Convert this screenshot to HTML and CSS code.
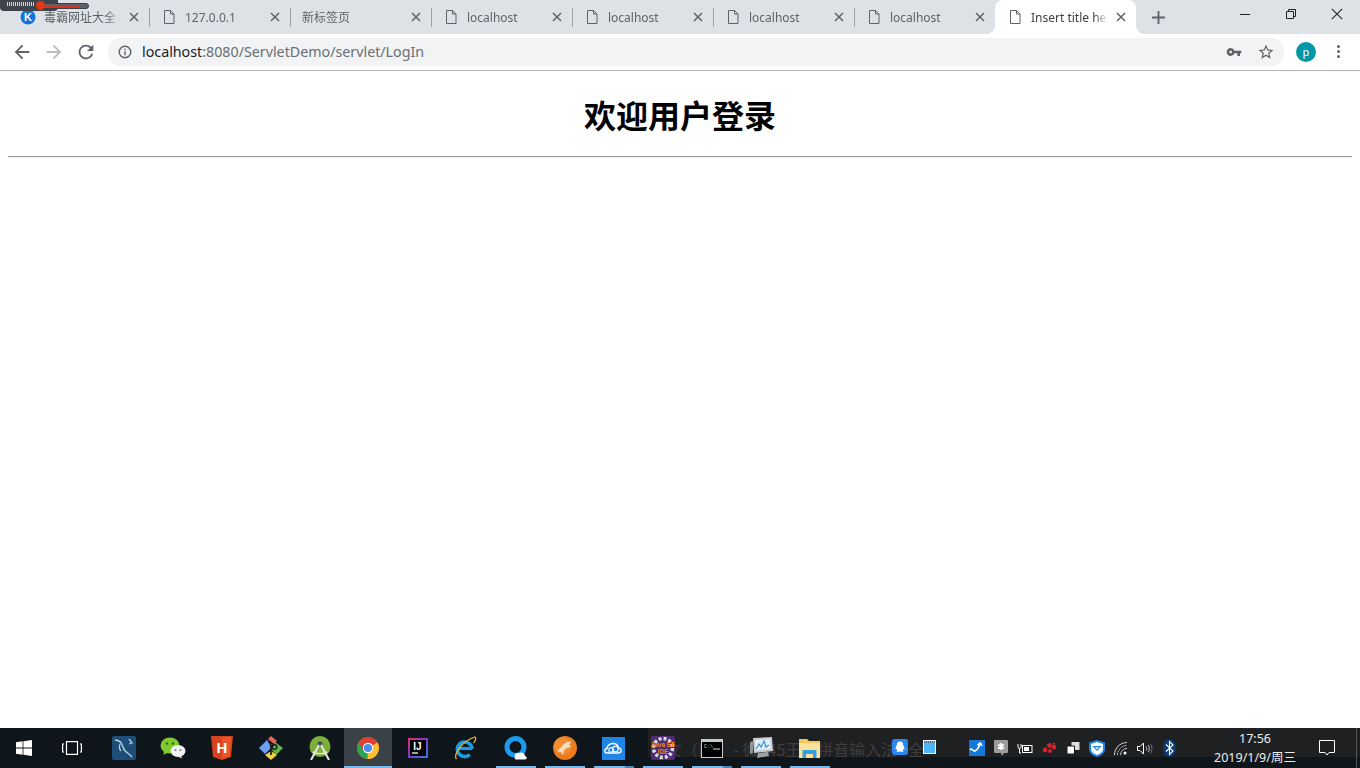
FILE: index.html
```html
<!DOCTYPE html>
<html lang="zh-CN">
<head>
<meta charset="utf-8">
<title>Insert title here</title>
<link rel="stylesheet" href="styles.css">
</head>
<body>
<svg class="defs" width="0" height="0" aria-hidden="true">
  <symbol id="doc" viewBox="0 0 16 16"><path d="M3.5 1.5h6l3.5 3.5v9.500h-9.500z M9.500 1.500v3.500h3.500" fill="none" stroke="#5f6368" stroke-width="1"/></symbol>
  <symbol id="x" viewBox="0 0 10 10"><path d="M1 1l8 8M9 1l-8 8" stroke="#5f6368" stroke-width="1.500" fill="none"/></symbol>
</svg>

<div class="volume"><div class="meter"></div><div class="track"><span class="fill"></span><span class="knob"></span></div></div>

<header class="tabstrip">
  <div class="tab">
    <svg class="fav" viewBox="0 0 16 16"><circle cx="8" cy="8" r="7.500" fill="#1273dc"/><text x="8" y="12" text-anchor="middle" class="fav-k">K</text></svg>
    <span class="tab-title">毒霸网址大全</span>
    <svg class="close" viewBox="0 0 10 10"><use href="#x"/></svg><i class="sep"></i>
  </div>
  <div class="tab">
    <svg class="fav"><use href="#doc"/></svg>
    <span class="tab-title">127.0.0.1</span>
    <svg class="close" viewBox="0 0 10 10"><use href="#x"/></svg><i class="sep"></i>
  </div>
  <div class="tab">
    <span class="tab-title">新标签页</span>
    <svg class="close" viewBox="0 0 10 10"><use href="#x"/></svg><i class="sep"></i>
  </div>
  <div class="tab">
    <svg class="fav"><use href="#doc"/></svg>
    <span class="tab-title">localhost</span>
    <svg class="close" viewBox="0 0 10 10"><use href="#x"/></svg><i class="sep"></i>
  </div>
  <div class="tab">
    <svg class="fav"><use href="#doc"/></svg>
    <span class="tab-title">localhost</span>
    <svg class="close" viewBox="0 0 10 10"><use href="#x"/></svg><i class="sep"></i>
  </div>
  <div class="tab">
    <svg class="fav"><use href="#doc"/></svg>
    <span class="tab-title">localhost</span>
    <svg class="close" viewBox="0 0 10 10"><use href="#x"/></svg><i class="sep"></i>
  </div>
  <div class="tab">
    <svg class="fav"><use href="#doc"/></svg>
    <span class="tab-title">localhost</span>
    <svg class="close" viewBox="0 0 10 10"><use href="#x"/></svg>
  </div>
  <div class="tab tab-active">
    <svg class="fav"><use href="#doc"/></svg>
    <span class="tab-title">Insert title here</span>
    <svg class="close" viewBox="0 0 10 10"><use href="#x"/></svg>
  </div>
  <svg class="newtab" viewBox="0 0 14 14"><path d="M7 0v14M0 7h14" stroke="#5f6368" stroke-width="2"/></svg>
  <div class="spacer"></div>
  <div class="winbtn"><svg width="12" height="12" viewBox="0 0 12 12"><path d="M1 6.500h10" stroke="#222" stroke-width="1"/></svg></div>
  <div class="winbtn"><svg width="12" height="12" viewBox="0 0 12 12"><path d="M1.500 3.500h7v7h-7zM3.500 3.500v-2h7v7h-2" fill="none" stroke="#222" stroke-width="1"/></svg></div>
  <div class="winbtn"><svg width="12" height="12" viewBox="0 0 12 12"><path d="M.8.800l10.400 10.400M11.200.800L.8 11.200" stroke="#222" stroke-width="1.100"/></svg></div>
</header>

<nav class="toolbar">
  <div class="navbtn"><svg viewBox="0 0 24 24"><path fill="#5f6368" d="M20 11H7.830l5.590-5.590L12 4l-8 8 8 8 1.410-1.410L7.830 13H20v-2z"/></svg></div>
  <div class="navbtn"><svg viewBox="0 0 24 24"><path fill="#b9bbbe" d="M12 4l-1.410 1.410L16.170 11H4v2h12.170l-5.580 5.590L12 20l8-8z"/></svg></div>
  <div class="navbtn"><svg viewBox="0 0 24 24"><path fill="#5f6368" d="M17.650 6.350A7.958 7.958 0 0 0 12 4c-4.420 0-7.990 3.580-7.990 8s3.570 8 7.990 8c3.730 0 6.840-2.550 7.730-6h-2.080A5.990 5.990 0 0 1 12 18c-3.310 0-6-2.690-6-6s2.690-6 6-6c1.660 0 3.140.690 4.220 1.780L13 11h7V4l-2.350 2.350z"/></svg></div>
  <div class="omnibox">
    <svg class="info" viewBox="0 0 14 14"><circle cx="7" cy="7" r="5.800" fill="none" stroke="#5f6368" stroke-width="1.400"/><path d="M7 6.200v4M7 3.800v1.400" stroke="#5f6368" stroke-width="1.400"/></svg>
    <span class="url"><span class="host">localhost</span>:8080/ServletDemo/servlet/LogIn</span>
    <svg class="omni-key" viewBox="0 0 24 24"><path fill="#5f6368" d="M12.650 10A5.990 5.990 0 0 0 7 6c-3.310 0-6 2.690-6 6s2.690 6 6 6a5.990 5.990 0 0 0 5.650-4H17v4h4v-4h2v-4H12.650zM7 14c-1.100 0-2-.9-2-2s.9-2 2-2 2 .9 2 2-.9 2-2 2z"/></svg>
    <svg class="omni-star" viewBox="0 0 24 24"><path fill="#5f6368" d="M22 9.240l-7.190-.62L12 2 9.190 8.630 2 9.240l5.460 4.730L5.820 21 12 17.270 18.180 21l-1.630-7.030L22 9.240zM12 15.400l-3.760 2.270 1-4.280-3.320-2.880 4.380-.38L12 6.100l1.710 4.040 4.380.38-3.320 2.880 1 4.280L12 15.400z"/></svg>
  </div>
  <div class="avatar">p</div>
  <div class="menu"><i></i><i></i><i></i></div>
</nav>

<main class="page">
  <h1 class="title">欢迎用户登录</h1>
  <hr class="rule">
</main>

<footer class="taskbar">
  <div class="ime">中文（简） - 微345王码拼音输入法&nbsp;&nbsp;&nbsp;全</div>
  <div class="sys"><svg width="18" height="18" viewBox="0 0 18 18"><path fill="#fff" d="M1 3.200l6.600-.9v6.200H1zM8.400 2.200L17 1v7.500H8.400zM1 9.400h6.600v6.300L1 14.800zM8.400 9.400H17V17l-8.600-1.200z"/></svg></div>
  <div class="sys"><svg width="20" height="14" viewBox="0 0 20 14"><path d="M4.500.6h11v12.800h-11zM2 3H.6v8H2M18 3h1.400v8H18" fill="none" stroke="#fff" stroke-width="1.200"/></svg></div>
  <div class="apps">
    <div class="app"><svg width="24" height="24" viewBox="0 0 24 24"><rect width="24" height="24" rx="2" fill="#1d4e78"/><path d="M3 4c4 0 7 3 8 7s3 5 6 7l3 3M8 8c-1 3 0 6 1 7M17 3l3 4-3 1" fill="none" stroke="#b9cfdf" stroke-width="1.300"/></svg></div>
    <div class="app"><svg width="26" height="22" viewBox="0 0 26 22"><ellipse cx="10" cy="8.500" rx="9.500" ry="8" fill="#7fcb2c"/><path d="M4 14l-.5 4 4.500-2.500z" fill="#7fcb2c"/><circle cx="7" cy="6.500" r="1.200" fill="#33691e"/><circle cx="13" cy="6.500" r="1.200" fill="#33691e"/><ellipse cx="18" cy="14" rx="7.500" ry="6" fill="#f2f2f2"/><path d="M21 18.500l1 3-4-2z" fill="#f2f2f2"/><circle cx="15.500" cy="13" r="1" fill="#777"/><circle cx="20.500" cy="13" r="1" fill="#777"/></svg></div>
    <div class="app"><svg width="22" height="24" viewBox="0 0 22 24"><path d="M0 0h22l-2 21-9 3-9-3z" fill="#d8431f"/><path d="M11 1v21.500l7.500-2.500L20.300 1z" fill="#e8562a"/><text x="11" y="17" text-anchor="middle" class="ic-h">H</text></svg></div>
    <div class="app"><svg width="24" height="24" viewBox="0 0 24 24"><path d="M0 12l8-8 6 6-8 8z" fill="#6d9ef6"/><path d="M9 3l3-3 6 5-3 3z" fill="#e8655a"/><path d="M16 6l8 6-7 7-4-5z" fill="#62b84a"/><path d="M12 15l6 4-6 5-6-5z" fill="#f4cf4a"/><path d="M9 5c3 2 3 5 3 10v4M15 8c-2 1-3 4-3 7" fill="none" stroke="#1d1d1d" stroke-width="1.700"/><circle cx="15.500" cy="11" r="2.300" fill="none" stroke="#1d1d1d" stroke-width="1.500"/></svg></div>
    <div class="app"><svg width="24" height="24" viewBox="0 0 24 24"><circle cx="12" cy="10.500" r="10.500" fill="#7caf38"/><circle cx="12" cy="8" r="2.500" fill="#445"/><path d="M11 9L3 24M13 9l8 15" stroke="#e8e8e8" stroke-width="2"/><path d="M5 16c4 2 10 2 14 0" stroke="#e8e8e8" stroke-width="1.400" fill="none"/></svg></div>
    <div class="app app-active"><svg width="24" height="24" viewBox="0 0 24 24"><circle cx="12" cy="12" r="11" fill="#dc4335"/><path d="M12 12L2.500 6.500A11 11 0 0 0 12 23z" fill="#2fa44f" /><path d="M12 12l-.5 11A11 11 0 0 0 21.500 6.500z" fill="#fbc02d"/><path d="M12 6.500h9.500A11 11 0 0 0 2.500 6.500L7 14z" fill="#dc4335"/><circle cx="12" cy="12" r="5.200" fill="#fff"/><circle cx="12" cy="12" r="4.100" fill="#4a8df0"/></svg></div>
    <div class="app"><svg width="20" height="20" viewBox="0 0 20 20"><defs><linearGradient id="ij" x1="0" y1="0" x2="1" y2="1"><stop offset="0" stop-color="#e62e6f"/><stop offset=".5" stop-color="#7a3bd0"/><stop offset="1" stop-color="#2b7de9"/></linearGradient></defs><rect width="20" height="20" fill="url(#ij)"/><rect x="2" y="2" width="16" height="16" fill="#000"/><text x="9.500" y="12" text-anchor="middle" class="ic-ij">IJ</text><path d="M4 15h6" stroke="#fff" stroke-width="1.300"/></svg></div>
    <div class="app"><svg class="ie" width="24" height="24" viewBox="0 0 24 24"><path d="M5 12.500h14" stroke="#1b9be4" stroke-width="3.200"/><path d="M19 13a7.300 7.300 0 1 0-2.300 5.600" fill="none" stroke="#1b9be4" stroke-width="3.600"/><path d="M3.500 23C0 19 9 5 22 1c1.500 2 .5 4-1.500 6" fill="none" stroke="#e3b23c" stroke-width="1.300"/></svg></div>
    <div class="app"><svg width="24" height="24" viewBox="0 0 24 24"><circle cx="11.500" cy="11" r="8.500" fill="none" stroke="#1c9cf0" stroke-width="5"/><path d="M11 21c-1.500-3 2-5 4-3.500 2-2 6-.5 6 2.500 2 0 2.500 3.500 0 3.500H12c-1.500 0-1.500-2-1-2.500z" fill="#fff"/></svg></div>
    <div class="app"><svg width="24" height="24" viewBox="0 0 24 24"><circle cx="12" cy="12" r="12" fill="#ea7a1c"/><circle cx="10" cy="10" r="9" fill="#f19a3e" opacity=".6"/><path d="M4 15c2-1 3-3 5-5 2-3 6-5 10-4-2 1-3 2-3 3l2 2-4 1-3 2-1 5-2-3z" fill="#f6ddc2"/></svg></div>
    <div class="app"><svg width="23" height="23" viewBox="0 0 23 23"><rect width="23" height="23" fill="#1e86e8"/><path d="M5 16c-3 0-3-4 0-4.500 0-3 3-5 6-5 3 0 5 2 5.500 4.500 3-.5 4 4.500 0 5z" fill="none" stroke="#fff" stroke-width="1.300"/><circle cx="9" cy="13" r="2.200" fill="none" stroke="#fff" stroke-width="1.100"/><circle cx="13.500" cy="12" r="2.800" fill="none" stroke="#fff" stroke-width="1.100"/></svg></div>
    <div class="app"><svg width="24" height="24" viewBox="0 0 24 24"><rect width="24" height="24" rx="2" fill="#4d2c73"/><circle cx="12" cy="12" r="9.500" fill="none" stroke="#dcdcdc" stroke-width="3.500" stroke-dasharray="3 2"/><text x="12" y="11" text-anchor="middle" class="ic-je">Java EE</text><text x="12" y="18" text-anchor="middle" class="ic-je">IDE</text></svg></div>
    <div class="app"><svg width="22" height="19" viewBox="0 0 22 19"><rect width="22" height="19" fill="#c9c9c9"/><rect x="1" y="3" width="20" height="15" fill="#000"/><text x="3" y="9" class="ic-cmd">C:\</text><path d="M12 10h7" stroke="#ddd" stroke-width="1"/></svg></div>
    <div class="app"><svg width="24" height="22" viewBox="0 0 24 22"><path d="M4 1l19-1 1 14-19 2z" fill="#c8ccd0"/><path d="M6 3l15-1 1 10-16 1.500z" fill="#dff0fa"/><path d="M7 12l3-5 2 3 3-6 2 6 3-2" fill="none" stroke="#3a8fd8" stroke-width="1.200"/><path d="M9 16l10-1 1 4-12 2z" fill="#9aa0a4"/><path d="M1 5l3-1v12l-3 1z" fill="#8e9498"/></svg></div>
    <div class="app"><svg width="21" height="19" viewBox="0 0 21 19"><path d="M0 0h8l2 2h11v17H0z" fill="#f2c75c"/><path d="M0 4h21v15H0z" fill="#fbe29a"/><path d="M3.500 19v-8h14v8h-3.500v-4H7v4z" fill="#2f9fe8"/></svg></div>
  </div>
  <div class="quick">
    <svg width="16" height="16" viewBox="0 0 20 20"><rect width="20" height="20" rx="3" fill="#2c86ec"/><path d="M10 3c-3 0-4 2-4 4.500 0 1-2 3-1.500 5.500 1 .5 1.500-.5 1.500-.5l.5 1.500-1 1.500c2 1 3.500 0 4.500 0s2.500 1 4.500 0l-1-1.500.5-1.500s.5 1 1.500.5c.5-2.500-1.500-4.500-1.500-5.500C14 5 13 3 10 3z" fill="#fff"/></svg>
    <svg width="13" height="14" viewBox="0 0 13 14"><rect x=".5" y=".5" width="12" height="13" fill="#4db5fa" stroke="#fff"/><path d="M1 2h11" stroke="#333" stroke-width="1" stroke-dasharray="1 1"/></svg>
  </div>
  <div class="tray">
    <span class="tray-first"><svg width="16" height="16" viewBox="0 0 16 16"><rect width="16" height="16" fill="#1677d8"/><path d="M1 10c2-3 3 2 5 1s4-4 5-7M8.500 5L11.500 3l1.500 3" fill="none" stroke="#fff" stroke-width="1.600"/></svg></span>
    <span class="tray-cell"><svg width="14" height="16" viewBox="0 0 14 16"><path d="M1 0h12a1 1 0 0 1 1 1v11a1 1 0 0 1-1 1H10l-2 3-1-3H1a1 1 0 0 1-1-1V1a1 1 0 0 1 1-1z" fill="#9b9b9b"/><path d="M7 3v7M4 4.500l6 4M10 4.500l-6 4" stroke="#fff" stroke-width="1.600"/></svg></span>
    <span class="tray-cell"><svg width="16" height="11" viewBox="0 0 16 11"><path d="M1 1v3a1.500 1.500 0 0 0 3 0V1M2.500 5.500V10H4" fill="none" stroke="#fff" stroke-width="1"/><rect x="5.500" y="2.500" width="9.500" height="7" fill="none" stroke="#fff"/><rect x="7" y="4" width="5" height="4" fill="#fff"/></svg></span>
    <span class="tray-cell"><svg width="15" height="12" viewBox="0 0 15 12"><g fill="#d8202a"><circle cx="3" cy="8" r="2.400"/><circle cx="7.500" cy="3.500" r="2.400"/><circle cx="12" cy="5" r="2.400"/><circle cx="8" cy="9" r="2"/><circle cx="12" cy="1.500" r="1"/></g></svg></span>
    <span class="tray-cell"><svg width="13" height="12" viewBox="0 0 13 12"><path d="M4.500 0h8v8h-8z" fill="#ddd"/><path d="M0 4h7.500v8H0z" fill="#fff" stroke="#111"/></svg></span>
    <span class="tray-cell"><svg width="16" height="17" viewBox="0 0 16 17"><path d="M8 0l8 2.500V9c0 4-4 7-8 8-4-1-8-4-8-8V2.500z" fill="#1a86ea"/><path d="M8 2l6 2v5c0 3-3 5-6 6-3-1-6-3-6-6V4z" fill="#fff"/><path d="M3.500 6h9L8 11z" fill="#1a86ea"/><path d="M6 7.200h4L8 9.200z" fill="#fff"/></svg></span>
    <span class="tray-cell"><svg width="14" height="13" viewBox="0 0 14 13"><g fill="none" stroke="#d5d5d5" stroke-width="1"><path d="M.5 13C.5 6 6 .5 13 .5"/><path d="M3.500 13c0-5 4-9.500 9.500-9.500" stroke-dasharray="1.500 1"/><path d="M6.500 13c0-3.500 3-6.500 6.500-6.500"/></g><circle cx="11" cy="11" r="1.500" fill="#fff"/></svg></span>
    <span class="tray-cell"><svg width="16" height="13" viewBox="0 0 16 13"><path d="M.5 4.500h2.500L6.500 1v11L3 8.500H.5z" fill="none" stroke="#fff"/><path d="M9 4.500c1 1 1 3 0 4M11 3c1.800 2 1.800 5 0 7" fill="none" stroke="#ccc"/><path d="M13 1.500c2.600 3 2.600 7 0 10" fill="none" stroke="#777"/></svg></span>
    <span class="tray-cell"><svg width="13" height="18" viewBox="0 0 13 18"><ellipse cx="6.500" cy="9" rx="6.500" ry="9" fill="#0b3a75"/><path d="M3 5.500l7 6.500-3.500 3.500v-13l3.500 3.500-7 6.500" fill="none" stroke="#fff" stroke-width="1.100"/></svg></span>
  </div>
  <div class="clock"><span class="clock-time">17:56</span><span>2019/1/9/周三</span></div>
  <div class="notify"><svg width="16" height="16" viewBox="0 0 16 16"><path d="M.5.500h15v12H10L8 15l-2-2.500H.5z" fill="none" stroke="#fff"/></svg></div>
  <div class="peek"></div>
</footer>
</body>
</html>
```

FILE: styles.css
```css
* { box-sizing: border-box; }
html, body { margin: 0; padding: 0; }
body {
  width: 1360px;
  height: 768px;
  overflow: hidden;
  display: flex;
  flex-direction: column;
  background: #fff;
  font-family: "Noto Sans", "Noto Sans CJK SC", sans-serif;
  position: relative;
}
.defs { position: absolute; }

/* volume overlay */
.volume {
  position: absolute;
  left: 0; top: 0;
  width: 89px; height: 11px;
  z-index: 5;
}
.meter {
  position: absolute;
  left: 0; top: 0;
  width: 58px; height: 11px;
  background: #3f444b;
  border-radius: 0 0 4px 4px;
}
.meter::after {
  content: "";
  position: absolute;
  left: 7px; top: 2px;
  width: 28px; height: 4px;
  background: repeating-linear-gradient(90deg, #d8dca0 0 1px, #3f444b 1px 2px);
}
.track {
  position: absolute;
  left: 36px; top: 3px;
  width: 53px; height: 6px;
  background: #59636b;
  border-radius: 3px;
  border: 1px solid #3a4046;
}
.fill {
  position: absolute;
  left: 4px; top: 1px;
  width: 39px; height: 2px;
  background: #d8301a;
}
.knob {
  position: absolute;
  left: -1px; top: -3px;
  width: 9px; height: 9px;
  border-radius: 50%;
  background: #de3a14;
}

/* tabs */
.tabstrip {
  flex: none;
  height: 34px;
  display: flex;
  align-items: stretch;
  padding-left: 8px;
  background: #dee1e6;
}
.tab {
  position: relative;
  flex: none;
  width: 141px;
  display: flex;
  align-items: center;
  padding: 0 10px 0 12px;
  font-size: 12px;
  color: #5f6368;
}
.fav {
  flex: none;
  width: 16px; height: 16px;
  margin-right: 8px;
}
.fav-k { font: bold 11px "Liberation Sans", sans-serif; fill: #fff; }
.tab-title {
  flex: 1;
  min-width: 0;
  white-space: nowrap;
  overflow: hidden;
  -webkit-mask-image: linear-gradient(90deg, #000 82%, transparent 100%);
  mask-image: linear-gradient(90deg, #000 82%, transparent 100%);
}
.close { flex: none; width: 10px; height: 10px; margin-left: 8px; }
.sep {
  position: absolute;
  right: -1px; top: 8px;
  width: 1px; height: 19px;
  background: #9fa3a8;
}
.tab-active {
  background: #fff;
  border-radius: 8px 8px 0 0;
  color: #3c4043;
}
.tab-active::before, .tab-active::after {
  content: "";
  position: absolute;
  bottom: 0;
  width: 8px; height: 8px;
}
.tab-active::before { left: -8px; background: radial-gradient(circle at 0 0, transparent 7.500px, #fff 8px); }
.tab-active::after { right: -8px; background: radial-gradient(circle at 100% 0, transparent 7.500px, #fff 8px); }
.newtab { flex: none; width: 13px; height: 13px; align-self: center; margin-left: 16px; }
.spacer { flex: 1; }
.winbtn {
  flex: none;
  width: 46px;
  height: 28px;
  display: flex;
  align-items: center;
  justify-content: center;
}

/* toolbar */
.toolbar {
  flex: none;
  height: 37px;
  display: flex;
  align-items: center;
  padding: 0 0 1px 6px;
  background: #fff;
  border-bottom: 1px solid #b4b4b4;
}
.navbtn {
  flex: none;
  width: 32px;
  height: 28px;
  display: flex;
  align-items: center;
  justify-content: center;
}
.navbtn svg { width: 22px; height: 22px; }
.omnibox {
  flex: none;
  width: 1176px;
  height: 28px;
  margin-left: 6px;
  display: flex;
  align-items: center;
  padding: 0 9px 0 10px;
  border-radius: 14px;
  background: #f1f3f4;
}
.info { flex: none; width: 14px; height: 14px; }
.url {
  flex: 1;
  margin-left: 10px;
  font-size: 14.250px;
  color: #6a6e73;
  white-space: nowrap;
}
.host { color: #202124; }
.omni-key { flex: none; width: 16px; height: 16px; }
.omni-star { flex: none; width: 18px; height: 18px; margin-left: 15px; }
.avatar {
  flex: none;
  width: 20px; height: 20px;
  margin-left: 12px;
  border-radius: 50%;
  background: #0097a7;
  color: #fff;
  font-size: 11px;
  line-height: 19px;
  text-align: center;
}
.menu {
  flex: none;
  margin-left: 21px;
  display: flex;
  flex-direction: column;
  gap: 2px;
}
.menu i { display: block; width: 3px; height: 3px; border-radius: 50%; background: #5f6368; }

/* page */
.page { flex: 1; padding: 8px 8px 0; }
.title {
  margin: 19px 0 26px;
  font-family: "Noto Sans CJK SC", "Noto Sans", sans-serif;
  font-size: 32px;
  font-weight: 700;
  line-height: 32px;
  text-align: center;
  color: #000;
}
.rule {
  margin: 0;
  height: 2px;
  border: 0;
  border-top: 1px solid #999;
  border-bottom: 1px solid #eee;
}

/* taskbar */
.taskbar {
  flex: none;
  position: relative;
  height: 40px;
  display: flex;
  background: #0e151b;
  color: #eee;
}
.ime {
  position: absolute;
  left: 648px; top: 0; right: 0;
  height: 29px;
  padding-left: 2px;
  background: #1f2022;
  color: #3e3e3e;
  font-family: "Noto Sans CJK SC", sans-serif;
  font-size: 16px;
  line-height: 42px;
  white-space: nowrap;
  overflow: hidden;
}
.sys, .app, .quick, .tray, .clock, .notify, .peek { position: relative; }
.sys {
  flex: none;
  width: 48px;
  display: flex;
  align-items: center;
  justify-content: center;
}
.apps { flex: none; display: flex; margin-left: 3px; }
.app {
  flex: none;
  width: 49px;
  height: 40px;
  display: flex;
  align-items: center;
  justify-content: center;
}
.app::after {
  content: "";
  position: absolute;
  left: 4.500px; right: 4.500px; bottom: 0;
  height: 2px;
}
.app:nth-child(n+9)::after { background: #76b9ed; }
.app:nth-child(11)::after, .app:nth-child(13)::after {
  background: linear-gradient(90deg, #76b9ed 78%, #4b86b4 78%);
}
.app-active { background: #3a4248; width: 48px; margin-right: 1px; }
.app-active::after { left: 0; right: 0; background: #76b9ed; }
.ie { margin-left: -3px; }
.ic-h { font: bold 15px "Liberation Sans", sans-serif; fill: #fff; }
.ic-ij { font: bold 10px "Liberation Sans", sans-serif; fill: #fff; }
.ic-je { font: bold 6.500px "Liberation Sans", sans-serif; fill: #f0821e; }
.ic-cmd { font: 5px "Liberation Mono", monospace; fill: #ddd; }
.quick {
  flex: none;
  width: 44px;
  margin-left: 58px;
  display: flex;
  align-items: center;
  gap: 15px;
  padding-bottom: 3px;
}
.tray {
  flex: none;
  margin-left: 33px;
  width: 212px;
  display: flex;
  align-items: center;
}
.tray svg { display: block; flex: none; }
.tray-first { flex: none; width: 20px; }
.tray-cell {
  flex: none;
  width: 24px;
  display: flex;
  justify-content: center;
}
.clock {
  flex: none;
  margin-left: 30px;
  width: 88px;
  display: flex;
  flex-direction: column;
  align-items: center;
  justify-content: center;
  font-size: 12.500px;
  line-height: 20px;
  font-family: "Noto Sans", "Noto Sans CJK SC", sans-serif;
}
.clock-time { padding-top: 1px; line-height: 19px; }
.notify {
  flex: none;
  width: 48px;
  margin-left: 4px;
  display: flex;
  align-items: center;
  justify-content: center;
}
.peek { flex: 1; border-left: 1px solid #555; margin-left: 5px; }
```
